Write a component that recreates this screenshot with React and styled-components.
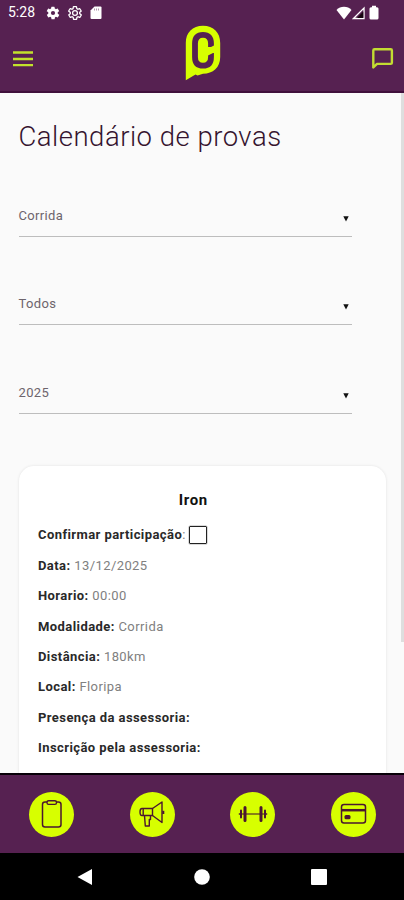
import React from 'react';
import styled, { createGlobalStyle } from 'styled-components';

const PURPLE = '#562151';
const LIME = '#d7ff00';
const INK = '#4a1730';

const GlobalStyle = createGlobalStyle`
  * {
    box-sizing: border-box;
  }

  body {
    margin: 0;
    background: #000;
    font-family: Roboto, 'Liberation Sans', sans-serif;
  }
`;

const Screen = styled.div`
  display: flex;
  flex-direction: column;
  width: 404px;
  height: 900px;
  overflow: hidden;
`;

const Header = styled.header`
  flex: none;
  height: 93px;
  background: ${PURPLE};
  border-bottom: 2px solid #40103c;
`;

const StatusBar = styled.div`
  display: flex;
  align-items: center;
  height: 25px;
  padding: 0 25px 0 8px;
  color: #fff;
`;

const Clock = styled.span`
  width: 38px;
  font-size: 14px;
  line-height: 25px;
`;

const StatusIcons = styled.div`
  display: flex;
  align-items: center;
  gap: ${(props) => props.$gap}px;
  margin-left: ${(props) => (props.$end ? 'auto' : '0')};
`;

const Toolbar = styled.div`
  display: grid;
  grid-template-columns: 1fr auto 1fr;
  height: 66px;
  padding: 0 10px 0 12px;
`;

const IconButton = styled.button`
  display: flex;
  align-self: center;
  justify-self: ${(props) => props.$side};
  padding: 1px 0 0;
  border: 0;
  background: none;
`;

const Content = styled.main`
  display: flex;
  flex: 1;
  min-height: 0;
  overflow: hidden;
  background: #fafafa;
`;

const Page = styled.div`
  flex: 1;
  padding: 28px 15px 0 18.5px;
`;

const ScrollThumb = styled.div`
  flex: none;
  width: 3px;
  height: 549px;
  background: #dedede;
`;

const Title = styled.h1`
  margin: 0 0 35px;
  color: #35142f;
  font-size: 27.5px;
  font-weight: 300;
  line-height: 32px;
  letter-spacing: 0.5px;
  white-space: nowrap;
`;

const Select = styled.div`
  display: flex;
  align-items: flex-end;
  justify-content: space-between;
  width: 333px;
  height: 48.5px;
  margin-bottom: 40px;
  padding: 0 2.5px 12px 0;
  border-bottom: 1px solid #bdbdbd;
  color: #6d646c;
  font-size: 13px;
  line-height: 16px;
  letter-spacing: 0.35px;
`;

const Card = styled.article`
  height: 400px;
  margin-top: 52px;
  padding: 24px 19.5px;
  border-radius: 15px;
  background: #fff;
  box-shadow: 0 0 3px rgba(0, 0, 0, 0.1);
`;

const CardTitle = styled.h2`
  margin: 0 0 10px;
  padding-right: 18px;
  color: #111;
  font-size: 15px;
  font-weight: 700;
  line-height: 20px;
  letter-spacing: 0.6px;
  text-align: center;
`;

const Field = styled.div`
  display: flex;
  align-items: center;
  height: 30.45px;
  color: #808080;
  font-size: 13px;
  letter-spacing: 0.42px;
  white-space: pre;
`;

const Label = styled.strong`
  color: #292929;
  font-weight: 700;
`;

const Checkbox = styled.span`
  width: 18px;
  height: 18px;
  margin-left: 3px;
  border: 1.5px solid #222;
  border-radius: 1px;
  box-shadow: 0 0 0 0.5px rgba(0, 0, 0, 0.3);
`;

const TabBar = styled.nav`
  display: flex;
  flex: none;
  align-items: center;
  justify-content: space-between;
  height: 80px;
  padding: 0 28px 0 29px;
  border-top: 2px solid #080008;
  background: ${PURPLE};
`;

const Tab = styled.button`
  display: flex;
  align-items: center;
  justify-content: center;
  width: 45px;
  height: 45px;
  padding: 0;
  border: 0;
  border-radius: 50%;
  background: ${LIME};
`;

const SystemNav = styled.div`
  display: grid;
  flex: none;
  grid-template-columns: repeat(3, 117px);
  align-items: center;
  justify-content: center;
  justify-items: center;
  height: 47px;
  background: #000;
`;

const GEAR =
  'M19.4 13a7.5 7.5 0 0 0 0-2l2.1-1.6a.5.5 0 0 0 .1-.7l-2-3.4a.5.5 0 0 0-.6-.2l-2.5 1a7.3 7.3 0 0 0-1.7-1l-.4-2.7a.5.5 0 0 0-.5-.4h-4a.5.5 0 0 0-.5.4l-.4 2.7c-.6.2-1.2.6-1.7 1l-2.5-1a.5.5 0 0 0-.6.2l-2 3.4a.5.5 0 0 0 .1.7L4.6 11a7.5 7.5 0 0 0 0 2l-2.1 1.6a.5.5 0 0 0-.1.7l2 3.4c.1.2.4.3.6.2l2.5-1c.5.4 1.1.8 1.7 1l.4 2.7c0 .2.2.4.5.4h4c.2 0 .5-.2.5-.4l.4-2.7c.6-.2 1.2-.6 1.7-1l2.5 1c.2.1.5 0 .6-.2l2-3.4a.5.5 0 0 0-.1-.7z';

const GearIcon = ({ outlined }) => (
  <svg width="14" height="14" viewBox="1 1 22 22">
    <path
      d={GEAR}
      fill={outlined ? 'none' : '#fff'}
      stroke="#fff"
      strokeWidth={outlined ? 2 : 0}
    />
    <circle
      cx="12"
      cy="12"
      r={outlined ? 3.8 : 3.3}
      fill={PURPLE}
      stroke="#fff"
      strokeWidth={outlined ? 2 : 0}
    />
  </svg>
);

const SdIcon = () => (
  <svg width="12" height="14" viewBox="0 0 12 14">
    <path d="M4.5.5H10.5Q11.5.5 11.5 1.5V12Q11.5 13 10.5 13H1.5Q.5 13 .5 12V4.5Z" fill="#fff" />
    <path d="M4.5 2.5v2M6.5 2.5v2M8.5 2.5v2" stroke="#a58aa2" strokeWidth=".9" />
  </svg>
);

const WifiIcon = () => (
  <svg width="16" height="14" viewBox="0 0 16 14">
    <path d="M.5 4Q3.5.8 8 .8T15.500 4L8 13.5Z" fill="#fff" />
  </svg>
);

const SignalIcon = () => (
  <svg width="13" height="14" viewBox="0 0 13 14">
    <path d="M12 2V12.5H1.5Z" fill="none" stroke="#fff" strokeWidth="1.3" />
    <path d="M11.300 5.5V12H5Z" fill="#16050f" />
  </svg>
);

const BatteryIcon = () => (
  <svg width="10" height="15" viewBox="0 0 10 15">
    <path d="M3 .7h4v1.500h1q1.5 0 1.5 1.5V13q0 1.5-1.5 1.5H2Q.5 14.5.5 13V3.7Q.5 2.2 2 2.2h1z" fill="#fff" />
  </svg>
);

const MenuIcon = () => (
  <svg width="22" height="18" viewBox="0 0 22 18">
    <path d="M1 2.5H21M1 9H21M1 15.2H21" stroke="#c2e22b" strokeWidth="2.3" />
  </svg>
);

const ChatIcon = () => (
  <svg width="23" height="23" viewBox="0 0 23 23">
    <path
      d="M2.300 20.500V3.500Q2.300 2.300 3.500 2.300H19.700Q20.900 2.300 20.900 3.500V15.700Q20.900 16.900 19.700 16.900H6Z"
      fill="none"
      stroke="#c2dc32"
      strokeWidth="2.4"
      strokeLinejoin="round"
    />
  </svg>
);

const Logo = () => (
  <svg width="36" height="56" viewBox="0 0 36 56">
    <path
      d="M.8 18C.8 7.5 7.5.8 18 .8S35.2 7.500 35.2 18V32C35.2 42.5 28 48.7 18 48.7L12.500 50.500L10.500 49.500L.8 55.2Z"
      fill={LIME}
    />
    <path
      d="M26 22V18.500Q26 9.800 18 9.800T10 18.500V32Q10 40.700 18 40.700T26 32V28"
      fill="none"
      stroke={PURPLE}
      strokeWidth="5.800"
    />
    <path d="M22 24L31 19.500V26.500L22 31Z" fill={LIME} />
  </svg>
);

const iconStroke = { fill: 'none', stroke: INK, strokeWidth: 1.5 };

const ClipboardIcon = () => (
  <svg width="22" height="30" viewBox="0 0 22 30">
    <rect x="1.500" y="3" width="18.500" height="25" rx="2.5" {...iconStroke} />
    <rect x="6" y="1.8" width="9.5" height="3.6" rx="1.6" fill={LIME} stroke={INK} strokeWidth="1.4" />
  </svg>
);

const MegaphoneIcon = () => (
  <svg width="28" height="28" viewBox="0 0 28 28">
    <g {...iconStroke} strokeWidth="1.4" strokeLinejoin="round">
      <path d="M4 8.500H14.500V15.500H4Q2 15.500 2 12T4 8.500ZM5.200 8.500V15.500" />
      <path d="M14.500 8.500L24 2V22.500L14.500 15.500" />
      <path d="M6.500 15.500L7.300 26H11.300V19.500H12.500V15.500" />
      <path d="M25.300 10.800v3.200" strokeWidth="2" />
    </g>
  </svg>
);

const DumbbellIcon = () => (
  <svg width="30" height="20" viewBox="0 0 30 20">
    <path d="M4 10H26" stroke="#5c3b25" strokeWidth="1.3" />
    <path d="M7 3.500V16.500M23 3.500V16.500" stroke={INK} strokeWidth="3" strokeLinecap="round" />
    <path d="M3 6.500V13.500M27 6.500V13.500" stroke={INK} strokeWidth="2" strokeLinecap="round" />
    <path d="M.8 10H2M28 10h1.2" stroke={INK} strokeWidth="1.3" />
  </svg>
);

const CardIcon = () => (
  <svg width="27" height="22" viewBox="0 0 27 22">
    <rect x="1.500" y="1.500" width="24" height="18.500" rx="2.5" {...iconStroke} />
    <path d="M1.500 7.200H25.500" stroke={INK} strokeWidth="2.5" />
    <rect x="4.500" y="12" width="6" height="4.2" rx="1.5" fill={INK} />
  </svg>
);

const ArrowIcon = () => (
  <svg width="6" height="10" viewBox="0 0 6 10">
    <path d="M.3 2.200H5.700L3 7.500Z" fill="#111" />
  </svg>
);

const filters = ['Corrida', 'Todos', '2025'];

const details = [
  { label: 'Data:', value: '13/12/2025' },
  { label: 'Horario:', value: '00:00' },
  { label: 'Modalidade:', value: 'Corrida' },
  { label: 'Distância:', value: '180km' },
  { label: 'Local:', value: 'Floripa' },
  { label: 'Presença da assessoria:', value: '' },
  { label: 'Inscrição pela assessoria:', value: '' },
];

const tabs = [
  { id: 'treinos', Icon: ClipboardIcon },
  { id: 'avisos', Icon: MegaphoneIcon },
  { id: 'academia', Icon: DumbbellIcon },
  { id: 'pagamentos', Icon: CardIcon },
];

export default function App() {
  return (
    <Screen>
      <GlobalStyle />
      <Header>
        <StatusBar>
          <Clock>5:28</Clock>
          <StatusIcons $gap={8}>
            <GearIcon />
            <GearIcon outlined />
            <SdIcon />
          </StatusIcons>
          <StatusIcons $gap={4} $end>
            <StatusIcons $gap={0}>
              <WifiIcon />
              <SignalIcon />
            </StatusIcons>
            <BatteryIcon />
          </StatusIcons>
        </StatusBar>
        <Toolbar>
          <IconButton $side="start">
            <MenuIcon />
          </IconButton>
          <Logo />
          <IconButton $side="end">
            <ChatIcon />
          </IconButton>
        </Toolbar>
      </Header>

      <Content>
        <Page>
          <Title>Calendário de provas</Title>
          {filters.map((filter) => (
            <Select key={filter}>
              {filter}
              <ArrowIcon />
            </Select>
          ))}
          <Card>
            <CardTitle>Iron</CardTitle>
            <Field>
              <Label>Confirmar participação</Label>:
              <Checkbox />
            </Field>
            {details.map(({ label, value }) => (
              <Field key={label}>
                <Label>{label}</Label>
                <span> {value}</span>
              </Field>
            ))}
          </Card>
        </Page>
        <ScrollThumb />
      </Content>

      <TabBar>
        {tabs.map(({ id, Icon }) => (
          <Tab key={id}>
            <Icon />
          </Tab>
        ))}
      </TabBar>

      <SystemNav>
        <svg width="16" height="18" viewBox="0 0 16 18">
          <path d="M15 1V17L.5 9Z" fill="#fff" />
        </svg>
        <svg width="16" height="16" viewBox="0 0 16 16">
          <circle cx="8" cy="8" r="7.8" fill="#fff" />
        </svg>
        <svg width="16" height="16" viewBox="0 0 16 16">
          <rect width="16" height="16" rx="1" fill="#fff" />
        </svg>
      </SystemNav>
    </Screen>
  );
}
